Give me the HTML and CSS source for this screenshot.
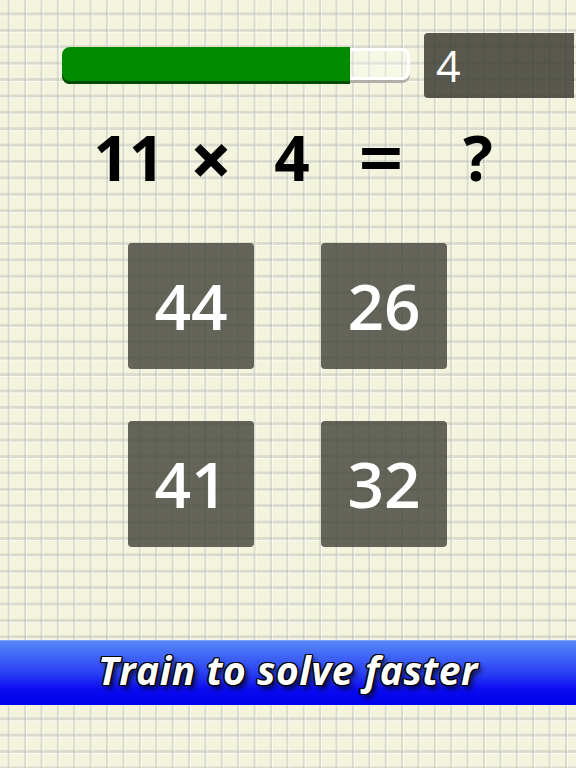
FILE: index.html
```html
<!DOCTYPE html>
<html>
<head>
<meta charset="utf-8">
<link rel="stylesheet" href="styles.css">
</head>
<body>
<div class="page">
  <div class="top">
    <div class="bar">
      <div class="fill"></div>
      <div class="rest"></div>
    </div>
    <div class="score">4</div>
  </div>
  <div class="equation">
    <span class="tok t1">11</span>
    <span class="tok t2 op times">×</span>
    <span class="tok t3">4</span>
    <span class="tok t4 op">=</span>
    <span class="tok t5">?</span>
  </div>
  <div class="answers">
    <div class="answer">44</div>
    <div class="answer">26</div>
    <div class="answer">41</div>
    <div class="answer">32</div>
  </div>
  <div class="banner"><span class="banner-text">Train to solve faster</span></div>
</div>
</body>
</html>
```

FILE: styles.css
```css
html, body {
  margin: 0;
  padding: 0;
}
body {
  width: 576px;
  height: 768px;
  overflow: hidden;
  background-color: #f4f4de;
  background-image:
    linear-gradient(to right, transparent 0 8px, rgba(160,168,165,.32) 8px 10px, rgba(255,255,255,.6) 10px 11px, transparent 11px),
    linear-gradient(to bottom, transparent 0 13px, rgba(160,168,165,.32) 13px 15px, rgba(255,255,255,.6) 15px 16px, transparent 16px);
  background-size: 16.4px 100%, 100% 16.4px;
  font-family: "Open Sans", "DejaVu Sans", sans-serif;
}
.page {
  display: flex;
  flex-direction: column;
}
.top {
  display: flex;
  align-items: center;
  margin-top: 33px;
  padding-left: 62px;
  gap: 14px;
  height: 65px;
}
.bar {
  display: flex;
  align-items: flex-start;
  height: 37px;
  margin-top: -1px;
}
.fill {
  width: 288px;
  height: 37px;
  background: #008a00;
  border-radius: 8px 0 0 8px;
  box-shadow: inset 0 -3px 0 #004a00;
}
.rest {
  box-sizing: border-box;
  width: 60px;
  height: 32px;
  margin-top: 1px;
  border: 3px solid #ffffff;
  border-left: none;
  border-radius: 0 8px 8px 0;
  background: rgba(255,255,255,.25);
  box-shadow: 0 3px 0 #b0b0a8;
}
.score {
  box-sizing: border-box;
  width: 150px;
  height: 65px;
  background: rgba(62,62,54,.86);
  border-radius: 4px 0 0 4px;
  color: #ffffff;
  font-size: 43px;
  font-weight: 400;
  line-height: 1;
  display: flex;
  align-items: center;
  padding-left: 12px;
}
.equation {
  display: flex;
  align-items: center;
  height: 62px;
  margin-top: 28px;
  padding-left: 88px;
  font-size: 62px;
  font-weight: 700;
  line-height: 1;
  color: #000000;
}
.tok {
  text-align: center;
}
.op {
  font-family: "DejaVu Sans", sans-serif;
  font-weight: 700;
  font-size: 60px;
}
.times {
  font-size: 50px;
  padding-top: 4px;
  -webkit-text-stroke: 2.5px #000;
}
.t1 { width: 82px; }
.t2 { width: 82px; }
.t3 { width: 80px; }
.t4 { width: 98px; }
.t5 { width: 96px; }
.answers {
  display: grid;
  grid-template-columns: 126px 126px;
  column-gap: 67px;
  row-gap: 52px;
  margin-top: 55px;
  padding-left: 128px;
}
.answer {
  height: 126px;
  background: rgba(72,72,62,.84);
  border-radius: 4px;
  color: #ffffff;
  font-size: 64px;
  font-weight: 600;
  line-height: 1;
  display: flex;
  align-items: center;
  justify-content: center;
}
.banner {
  margin-top: 93px;
  height: 65px;
  background: linear-gradient(to bottom, #5a88f8 0%, #4a76f6 12%, #2a40f4 50%, #0c0cf0 75%, #0000ee 100%);
  border-top: 1px solid #7ea2fa;
  box-sizing: border-box;
  display: flex;
  align-items: center;
  justify-content: center;
  padding-bottom: 7px;
}
.banner-text {
  color: #ffffff;
  font-size: 39px;
  font-weight: 700;
  font-style: italic;
  letter-spacing: 0.5px;
  text-shadow:
    -1.3px 0 0 #000, 1.3px 0 0 #000, 0 -1.3px 0 #000, 0 1.3px 0 #000,
    -1px -1px 0 #000, 1px -1px 0 #000, -1px 1px 0 #000, 1px 1px 0 #000,
    3px 4px 5px rgba(0,0,0,.75);
}
```
